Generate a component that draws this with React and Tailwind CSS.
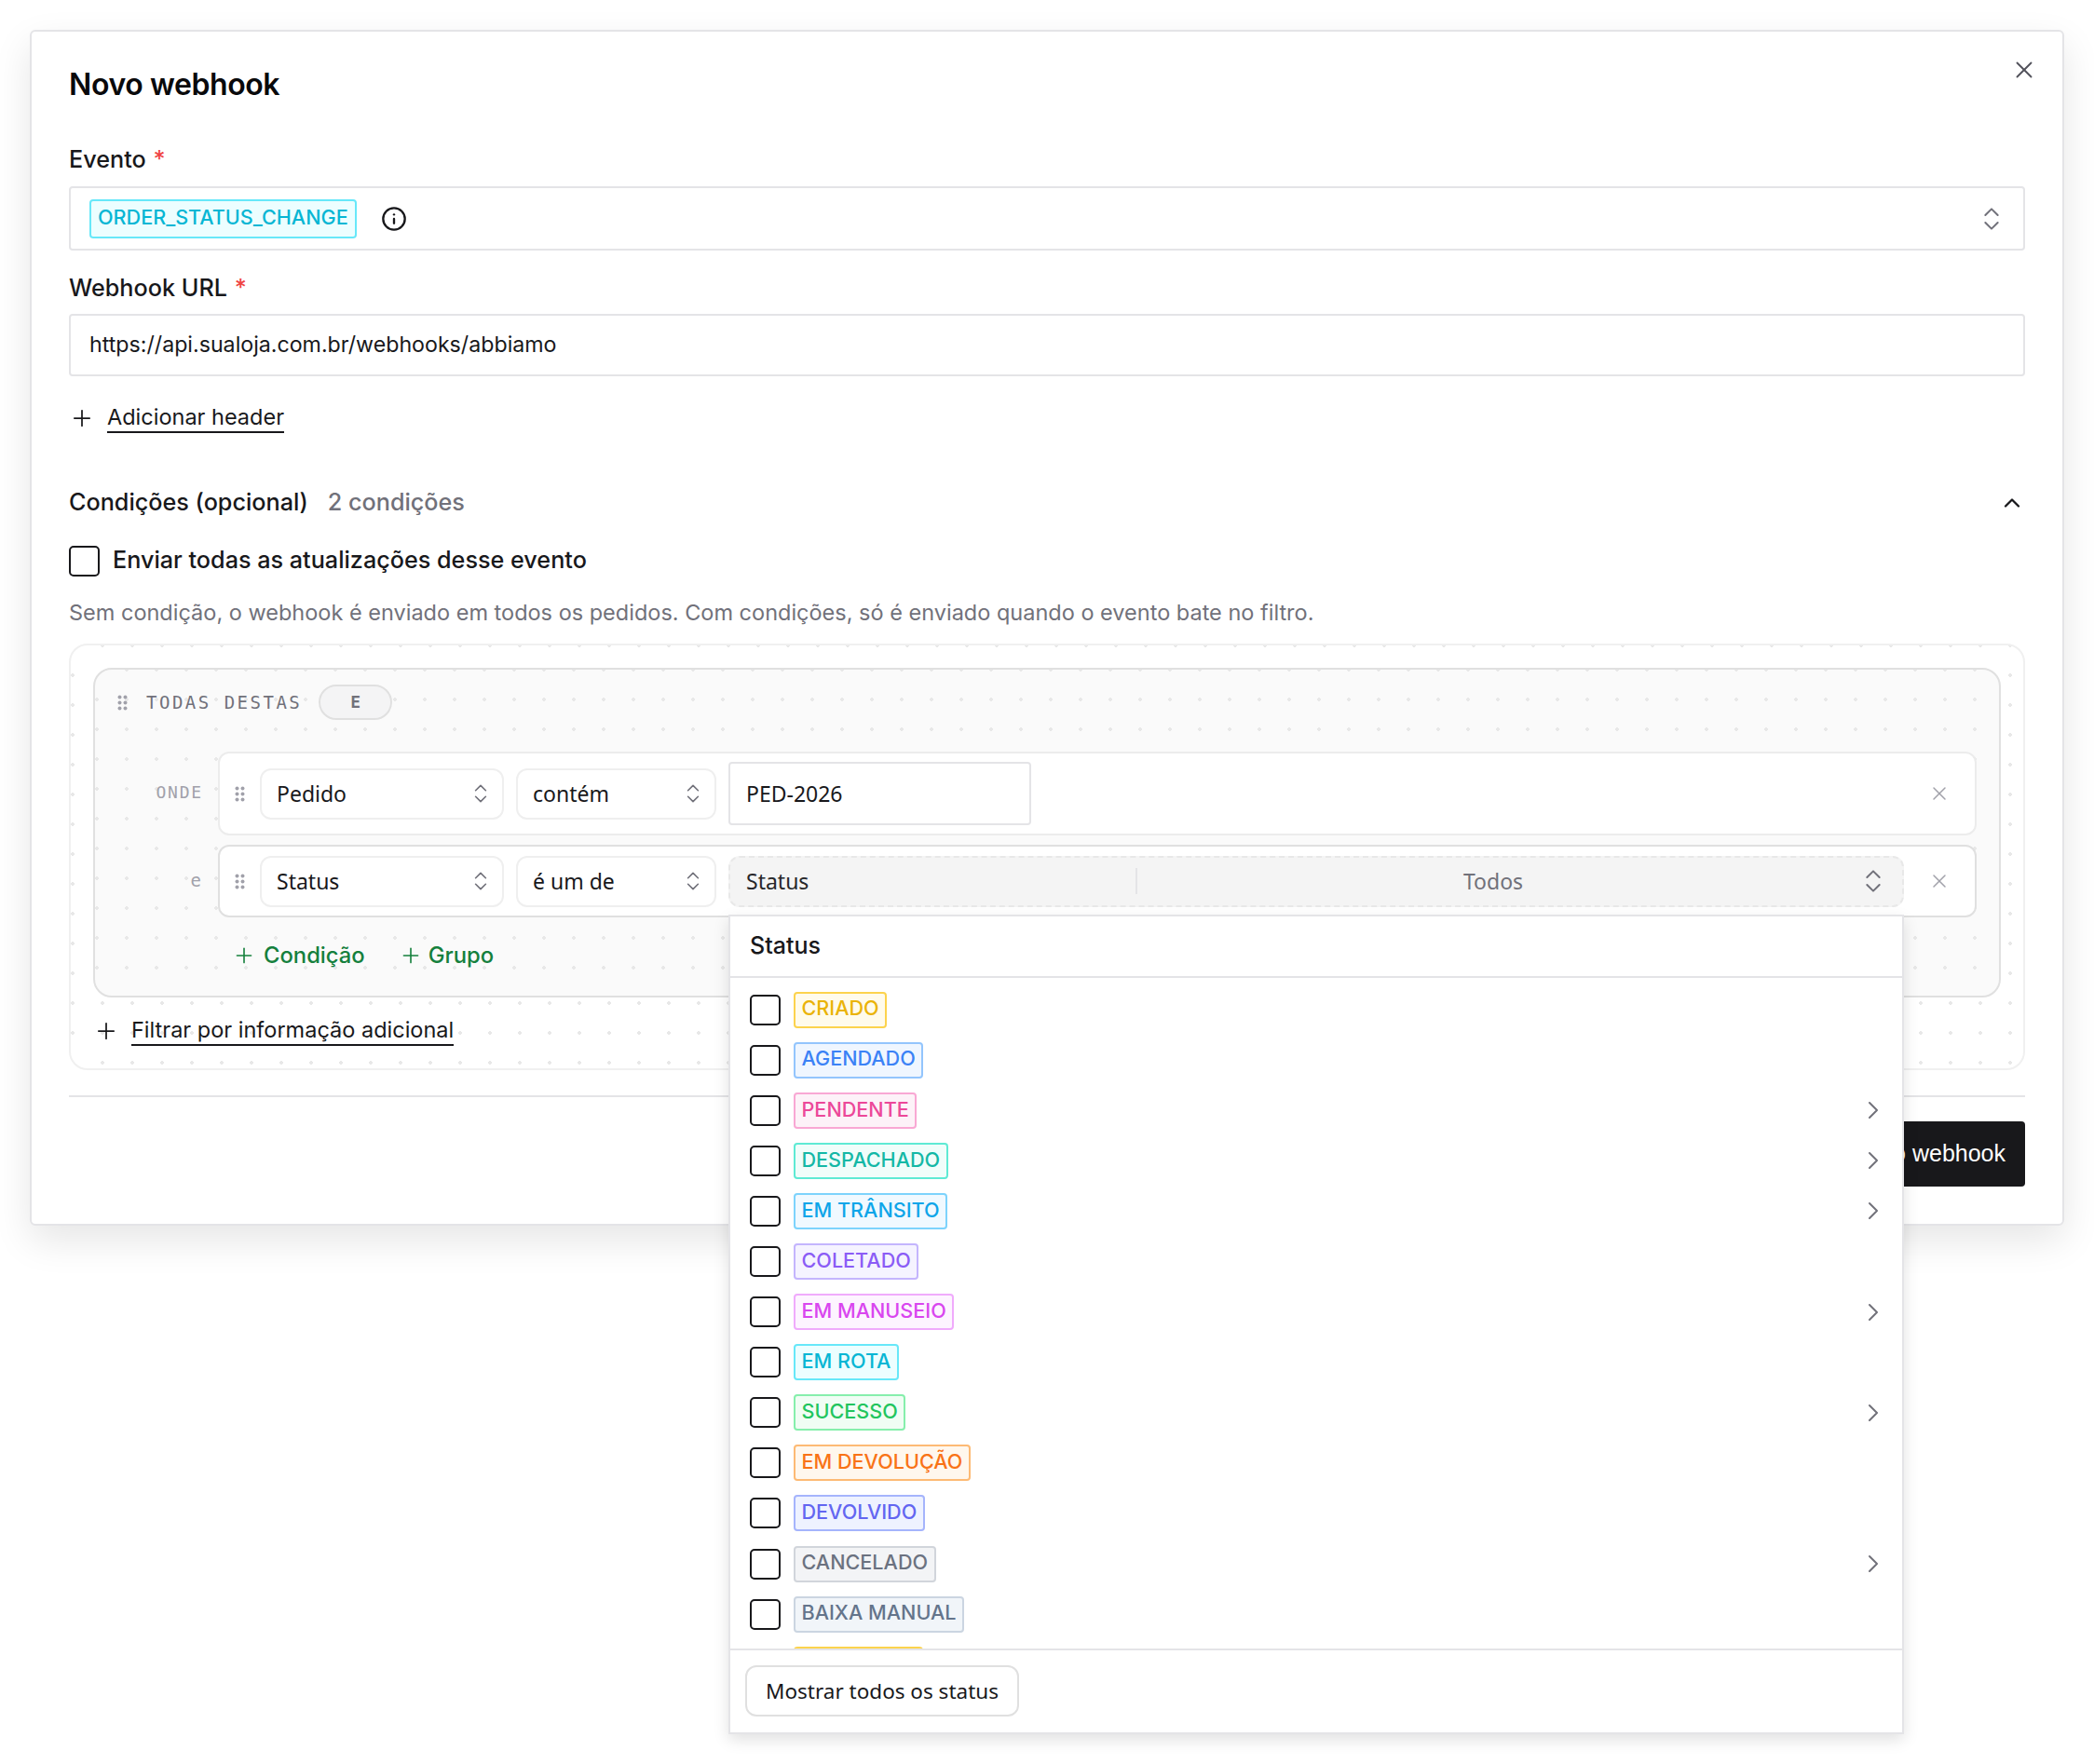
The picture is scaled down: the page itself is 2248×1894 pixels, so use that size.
import React from "react";
import { ChevronRight, ChevronUp, ChevronsUpDown, Info, Plus, X } from "lucide-react";

const statusList = [
  { label: "CRIADO", cls: "border-[#fcd34d] bg-[#fffbeb] text-[#eab308]" },
  { label: "AGENDADO", cls: "border-[#93c5fd] bg-[#eff6ff] text-[#3b82f6]" },
  { label: "PENDENTE", cls: "border-[#f9a8d4] bg-[#fdf2f8] text-[#ec4899]", more: true },
  { label: "DESPACHADO", cls: "border-[#5eead4] bg-[#f0fdfa] text-[#14b8a6]", more: true },
  { label: "EM TRÂNSITO", cls: "border-[#7dd3fc] bg-[#f0f9ff] text-[#0ea5e9]", more: true },
  { label: "COLETADO", cls: "border-[#c4b5fd] bg-[#f5f3ff] text-[#8b5cf6]" },
  { label: "EM MANUSEIO", cls: "border-[#f0abfc] bg-[#fdf4ff] text-[#d946ef]", more: true },
  { label: "EM ROTA", cls: "border-[#67e8f9] bg-[#ecfeff] text-[#06b6d4]" },
  { label: "SUCESSO", cls: "border-[#86efac] bg-[#f0fdf4] text-[#22c55e]", more: true },
  { label: "EM DEVOLUÇÃO", cls: "border-[#fdba74] bg-[#fff7ed] text-[#f97316]" },
  { label: "DEVOLVIDO", cls: "border-[#a5b4fc] bg-[#eef2ff] text-[#6366f1]" },
  { label: "CANCELADO", cls: "border-[#d1d5db] bg-[#f3f4f6] text-[#6b7280]", more: true },
  { label: "BAIXA MANUAL", cls: "border-[#cbd5e1] bg-[#f1f5f9] text-[#64748b]" },
  { label: "EM ESPERA", cls: "border-[#fcd34d] bg-[#fffbeb] text-[#eab308]" },
];

const Grip = () => (
  <svg width="11" height="17" viewBox="0 0 11 17" className="shrink-0 text-[#a1a1aa]" fill="currentColor">
    <circle cx="2.5" cy="2.5" r="2" />
    <circle cx="8.5" cy="2.5" r="2" />
    <circle cx="2.5" cy="8.5" r="2" />
    <circle cx="8.5" cy="8.5" r="2" />
    <circle cx="2.5" cy="14.5" r="2" />
    <circle cx="8.5" cy="14.5" r="2" />
  </svg>
);

const RowSelect = ({ label, w }) => (
  <div className={`flex h-[55px] ${w} items-center justify-between rounded-xl border-2 border-[#efefef] bg-white pl-[16px] pr-[10px] font-['Noto_Sans',sans-serif] text-[23px] text-[#18181b]`}>
    <span className="pt-[1px]">{label}</span>
    <ChevronsUpDown size={26} strokeWidth={1.5} className="text-[#71717a]" />
  </div>
);

const AddLink = ({ children }) => (
  <div className="flex items-center text-[23.5px] text-[#18181b]">
    <Plus size={28} strokeWidth={1.5} />
    <span className="ml-[13px] border-b-2 border-[#18181b] leading-[31px]">{children}</span>
  </div>
);

export default function App() {
  return (
    <div className="min-h-[1894px] bg-white pl-[32px] pr-[32px] pt-[32px] font-['Inter',sans-serif]">
      <div className="relative h-[1284px] w-[2184px] rounded-md border-2 border-[#e4e4e7] bg-white px-[40px] pt-[40px] shadow-[0_16px_40px_rgba(0,0,0,0.1)]">
        <X size={30} strokeWidth={1.5} className="absolute right-[26px] top-[26px] text-[#52525b]" />

        <h1 className="text-[32px] font-semibold leading-[34px] tracking-[-0.4px] text-[#09090b]">Novo webhook</h1>

        <div className="mt-[47px] text-[25.2px] font-[450] leading-[32px] text-[#18181b]">
          Evento <span className="ml-[1px] text-[#ef4444]">*</span>
        </div>
        <div className="mt-[13px] flex h-[69px] items-center justify-between rounded border-2 border-[#e4e4e7] bg-white pl-[20px] pr-[18px]">
          <div className="flex items-center">
            <span className="flex h-[42px] items-center rounded border-2 border-[#67e8f9] bg-[#ecfeff] px-[7px] pb-[3px] text-[21.6px] font-[450] text-[#06b6d4]">ORDER_STATUS_CHANGE</span>
            <Info size={28} strokeWidth={2} className="ml-[26px] text-[#18181b]" />
          </div>
          <ChevronsUpDown size={32} strokeWidth={1.5} className="text-[#71717a]" />
        </div>

        <div className="mt-[24px] text-[25.2px] font-[450] leading-[32px] text-[#18181b]">
          Webhook URL <span className="ml-[1px] text-[#ef4444]">*</span>
        </div>
        <div className="mt-[12px] flex h-[67px] items-center rounded border-2 border-[#e4e4e7] pl-[20px] text-[23.2px] text-[#18181b]">
          https://api.sualoja.com.br/webhooks/abbiamo
        </div>

        <div className="mt-[28px]">
          <AddLink>Adicionar header</AddLink>
        </div>

        <div className="mt-[59px] flex h-[32px] items-center justify-between text-[25.2px] font-[450]">
          <div className="flex items-center">
            <span className="text-[#18181b]">Condições (opcional)</span>
            <span className="ml-[21px] text-[#71717a]">2 condições</span>
          </div>
          <ChevronUp size={28} strokeWidth={2} className="text-[#18181b]" />
        </div>

        <div className="mt-[30px] flex h-[33px] items-center">
          <span className="h-[33px] w-[33px] rounded-[5px] border-2 border-[#18181b]" />
          <span className="ml-[14px] pb-[1px] text-[25.2px] font-[450] text-[#18181b]">Enviar todas as atualizações desse evento</span>
        </div>

        <p className="mt-[23px] text-[23.5px] leading-[32px] text-[#71717a]">
          Sem condição, o webhook é enviado em todos os pedidos. Com condições, só é enviado quando o evento bate no filtro.
        </p>

        <div className="mt-[17px] h-[458px] rounded-[20px] border-2 border-[#f0f0f0] bg-[radial-gradient(#e8e8e8_2px,transparent_2px)] bg-[size:32px_32px] bg-[position:-14px_-16px] px-[24px] pt-[24px]">
          <div className="h-[354px] rounded-[20px] border-2 border-[#e0e0e0] bg-[#fafafa] bg-[radial-gradient(#e8e8e8_2px,transparent_2px)] bg-[size:32px_32px] bg-[position:-14px_-16px] px-[24px] pt-[16px]">
            <div className="flex h-[38px] items-center">
              <Grip />
              <span className="ml-[20px] pt-[1px] font-['DejaVu_Sans_Mono',monospace] text-[19px] tracking-[2.5px] text-[#71717a]">TODAS DESTAS</span>
              <span className="ml-[18px] flex h-[38px] w-[79px] items-center justify-center rounded-full border-2 border-[#e0e0e0] bg-[#f4f4f5] pb-[2px] font-['DejaVu_Sans_Mono',monospace] text-[18px] font-bold text-[#71717a]">E</span>
            </div>

            <div className="mt-[34px] flex items-start">
              <span className="mt-[30px] w-[92px] text-right font-['DejaVu_Sans_Mono',monospace] text-[18px] tracking-[1.8px] text-[#a1a1aa]">ONDE</span>
              <div className="ml-[16px] flex h-[90px] flex-1 items-center rounded-xl border-2 border-[#ececec] bg-white pl-[16px] pr-[26px]">
                <Grip />
                <div className="ml-[16px]"><RowSelect label="Pedido" w="w-[262px]" /></div>
                <div className="ml-[13px]"><RowSelect label="contém" w="w-[215px]" /></div>
                <div className="ml-[13px] flex h-[68px] w-[325px] items-center rounded border-2 border-[#e4e4e7] pl-[17px] pt-[1px] font-['Noto_Sans',sans-serif] text-[23px] text-[#18181b]">PED-2026</div>
                <X size={24} strokeWidth={1.5} className="ml-auto text-[#a1a1aa]" />
              </div>
            </div>

            <div className="mt-[10px] flex items-start">
              <span className="mt-[24px] w-[92px] pr-[2px] text-right font-['DejaVu_Sans_Mono',monospace] text-[19px] text-[#a1a1aa]">e</span>
              <div className="ml-[16px] flex h-[78px] flex-1 items-center rounded-xl border-2 border-[#e0e0e0] bg-white pl-[16px] pr-[26px]">
                <Grip />
                <div className="ml-[16px]"><RowSelect label="Status" w="w-[262px]" /></div>
                <div className="ml-[13px]"><RowSelect label="é um de" w="w-[215px]" /></div>
                <div className="ml-[13px] flex h-[55px] w-[1262px] items-center rounded-xl border-2 border-dashed border-[#e8e8e8] bg-[#f4f4f4] pl-[17px] pr-[15px] font-['Noto_Sans',sans-serif] text-[23px]">
                  <span className="w-[418px] pt-[1px] text-[#27272a]">Status</span>
                  <span className="h-[28px] w-[2px] bg-[#e4e4e7]" />
                  <span className="flex-1 pr-[10px] pt-[1px] text-center text-[#71717a]">Todos</span>
                  <ChevronsUpDown size={32} strokeWidth={1.5} className="text-[#71717a]" />
                </div>
                <X size={24} strokeWidth={1.5} className="ml-auto text-[#a1a1aa]" />
              </div>
            </div>

            <div className="ml-[123px] mt-[23px] flex h-[36px] items-center text-[23.8px] font-[450] text-[#15803d]">
              <Plus size={26} strokeWidth={1.5} />
              <span className="ml-[8px]">Condição</span>
              <Plus size={26} strokeWidth={1.5} className="ml-[36px]" />
              <span className="ml-[6px]">Grupo</span>
            </div>
          </div>

          <div className="mt-[19px]">
            <AddLink>Filtrar por informação adicional</AddLink>
          </div>
        </div>

        <div className="mt-[27px] border-t-2 border-[#e4e4e7]" />

        <div className="mt-[26px] flex justify-end">
          <button className="flex h-[70px] items-center rounded bg-[#18181b] px-[21px] font-['Liberation_Sans',sans-serif] text-[25px] text-white">Novo webhook</button>
        </div>

        {/* status dropdown, sits over the form */}
        <div className="absolute left-[748px] top-[948px] h-[880px] w-[1262px] border-2 border-[#e4e4e7] bg-white shadow-[0_6px_16px_rgba(0,0,0,0.12)]">
          <div className="flex h-[66px] items-center border-b-2 border-[#e4e4e7] pl-[21px] text-[25px] font-medium text-[#18181b]">Status</div>
          <div className="h-[720px] overflow-hidden pt-[7px]">
            {statusList.map((s) => (
              <div key={s.label} className="flex h-[54.1px] items-center pl-[21px] pr-[15px]">
                <span className="h-[33px] w-[33px] shrink-0 rounded-[5px] border-2 border-[#18181b]" />
                <span className={`ml-[14px] flex h-[39px] items-center rounded border-2 px-[6.5px] pb-[3px] text-[21.6px] font-[450] ${s.cls}`}>{s.label}</span>
                {s.more && <ChevronRight size={32} strokeWidth={1.5} className="ml-auto text-[#71717a]" />}
              </div>
            ))}
          </div>
          <div className="border-t-2 border-[#e4e4e7] pl-[16px] pt-[16px]">
            <button className="flex h-[55px] w-[294px] items-center justify-center rounded-xl border-2 border-[#e0e0e0] bg-white pt-[1px] font-['Noto_Sans',sans-serif] text-[22.5px] text-[#18181b]">Mostrar todos os status</button>
          </div>
        </div>
      </div>
    </div>
  );
}
